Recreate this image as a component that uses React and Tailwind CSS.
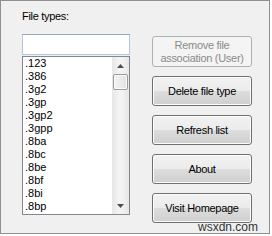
import React from 'react';

const fileTypes = ['.123', '.386', '.3g2', '.3gp', '.3gp2', '.3gpp', '.8ba', '.8bc', '.8be', '.8bf', '.8bi', '.8bp'];

function WinButton({ children, disabled }) {
  if (disabled) {
    return (
      <button
        disabled
        className="w-[100px] h-[31px] rounded-[3px] border border-[#adb2b5] bg-[#f4f4f4] text-[#8a8a8a] text-[11px] leading-[13px] tracking-[-0.3px] flex flex-col items-center justify-center"
      >
        {children}
      </button>
    );
  }
  return (
    <button className="w-[100px] h-[30px] rounded-[3px] border border-[#707070] bg-[linear-gradient(to_bottom,#f2f2f2_0%,#ebebeb_50%,#dddddd_50%,#cfcfcf_100%)] shadow-[inset_0_0_0_1px_#fcfcfc] text-black text-[11px] leading-[13px] tracking-[-0.3px] flex items-center justify-center">
      {children}
    </button>
  );
}

function Arrow({ up }) {
  return (
    <svg width="7" height="4" viewBox="0 0 7 4">
      {up ? <path d="M3.5 0 L7 4 L0 4 Z" fill="#4d4d4d" /> : <path d="M0 0 L7 0 L3.5 4 Z" fill="#4d4d4d" />}
    </svg>
  );
}

export default function App() {
  return (
    <div className="relative w-[272px] h-[236px] bg-white overflow-hidden" style={{ fontFamily: '"Liberation Sans", Arial, sans-serif' }}>
      <div className="w-[270px] h-[234px] border border-[#8e8f8f] bg-[#f0f0f0] flex items-start">
        {/* left column */}
        <div className="ml-[21px] mt-[8px] flex flex-col w-[108px]">
          <div className="text-[11px] leading-[14px] tracking-[-0.3px] text-black">File types:</div>
          <div className="mt-[11px] h-[21px] border border-[#b5c4d8] border-t-[#9aa7b7] bg-white" />
          <div className="mt-[1px] h-[159px] border border-[#828790] bg-white flex overflow-hidden">
            <div className="flex-1 pl-[2px] pt-[0px]">
              {fileTypes.map((t) => (
                <div key={t} className="text-[11px] leading-[13px] text-black">{t}</div>
              ))}
            </div>
            <div className="w-[17px] bg-[linear-gradient(to_right,#e6e6e6,#f3f3f3_40%,#f3f3f3_60%,#e6e6e6)] flex flex-col">
              <div className="h-[17px] flex items-center justify-center"><Arrow up /></div>
              <div className="mx-[1px] h-[16px] rounded-[2px] border border-[#9a9a9a] bg-[linear-gradient(to_right,#f3f3f3,#e2e2e2)] shadow-[inset_0_0_0_1px_#fbfbfb]" />
              <div className="flex-1" />
              <div className="h-[17px] flex items-center justify-center"><Arrow /></div>
            </div>
          </div>
        </div>
        {/* right column */}
        <div className="ml-[22px] mt-[35px] flex flex-col gap-[9px]">
          <WinButton disabled>
            <span>Remove file</span>
            <span>association (User)</span>
          </WinButton>
          <WinButton>Delete file type</WinButton>
          <WinButton>Refresh list</WinButton>
          <WinButton>About</WinButton>
          <WinButton>Visit Homepage</WinButton>
        </div>
      </div>
      <div className="absolute left-[198px] top-[220px] text-[12px] leading-[14px] text-[#333333]">wsxdn.com</div>
    </div>
  );
}
